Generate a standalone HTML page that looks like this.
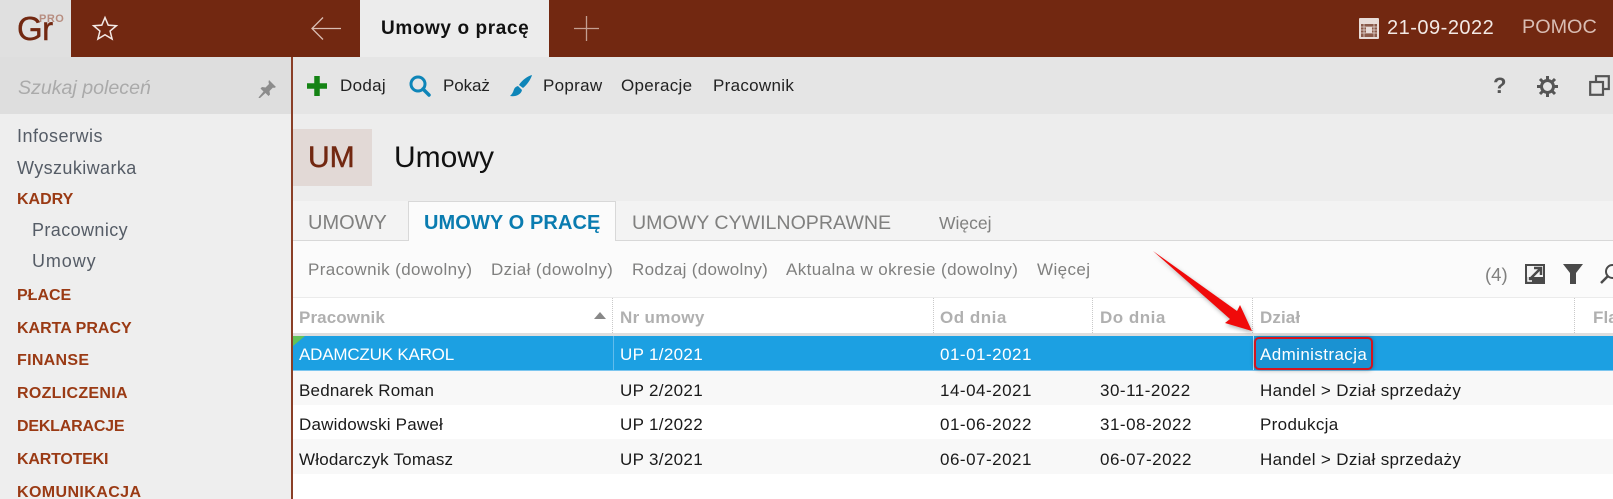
<!DOCTYPE html>
<html lang="pl"><head><meta charset="utf-8"><title>Umowy</title>
<style>
html,body{margin:0;padding:0;width:1613px;height:499px;overflow:hidden;background:#fff}
body{position:relative;font-family:"Liberation Sans",sans-serif}
.b{position:absolute}
.t{position:absolute;white-space:nowrap;line-height:20px;height:20px}
.s{color:#555c66;font-size:18px;letter-spacing:.4px}
.k{color:#9a3a14;font-size:16px;font-weight:bold}
.m{color:#222;font-size:17px;letter-spacing:.3px}
.f{color:#80807f;font-size:17px;letter-spacing:.4px}
.h{color:#b0b0b0;font-size:17px;font-weight:bold;letter-spacing:.1px}
.r{color:#1a1a1a;font-size:17px;letter-spacing:.33px}
.w{color:#fff;font-size:17px;letter-spacing:.33px}
.d{letter-spacing:.5px}
svg{position:absolute;overflow:visible}
</style></head><body>
<!-- top bar -->
<div class="b" style="left:0;top:0;width:1613px;height:57px;background:#722811"></div>
<div class="b" style="left:0;top:0;width:71px;height:57px;background:#e0e0e0"></div>
<div class="t" style="left:17px;top:12px;font-size:33px;line-height:34px;height:34px;letter-spacing:-.5px;color:#722811;-webkit-text-stroke:.4px #722811">Gr</div>
<div class="t" style="left:39px;top:13px;font-size:11px;line-height:12px;height:12px;font-weight:bold;color:#b78d80;letter-spacing:.5px">PRO</div>
<svg style="left:92px;top:16px" width="26" height="25" viewBox="0 0 26 25"><path d="M13 1.500l3.200 7.600 8.200.6-6.300 5.300 2 8-7.100-4.300-7.100 4.300 2-8L1.600 9.700l8.200-.6z" fill="none" stroke="#f3e9e5" stroke-width="1.500"/></svg>
<svg style="left:310px;top:16px" width="32" height="25" viewBox="0 0 32 25"><path d="M31 12.500H2M13 1.500L2 12.500l11 11" fill="none" stroke="#d9bdb3" stroke-width="1.300"/></svg>
<div class="b" style="left:360px;top:0;width:189px;height:57px;background:#ececec"></div>
<div class="t" style="left:381px;top:19px;font-size:19px;font-weight:bold;color:#111;letter-spacing:.6px">Umowy o pracę</div>
<svg style="left:574px;top:16px" width="25" height="25" viewBox="0 0 25 25"><path d="M12.500 0v25M0 12.500h25" stroke="#c49f92" stroke-width="1.300" fill="none"/></svg>
<svg style="left:1359px;top:18px" width="20" height="21" viewBox="0 0 20 21"><rect width="20" height="21" rx="1" fill="#e8dcd8"/><rect x="2" y="6" width="16" height="13" fill="#8a5a4a"/><rect x="7" y="9" width="6" height="6" fill="#e8dcd8"/><path d="M2 9h16M2 12h16M2 15h16M5 6v13M15 6v13" stroke="#e8dcd8" stroke-width=".7"/></svg>
<div class="t" style="left:1387px;top:18px;font-size:20px;color:#f3e9e5;letter-spacing:.5px">21-09-2022</div>
<div class="t" style="left:1522px;top:17px;font-size:19.800px;color:#d9bdb3">POMOC</div>
<!-- toolbar -->
<div class="b" style="left:293px;top:57px;width:1320px;height:57px;background:#e5e5e5"></div>
<svg style="left:307px;top:76px" width="20" height="20" viewBox="0 0 20 20"><path d="M10 0v20M0 10h20" stroke="#148314" stroke-width="5.500"/></svg>
<div class="t m" style="left:340px;top:76px">Dodaj</div>
<svg style="left:409px;top:75px" width="22" height="21" viewBox="0 0 22 21"><circle cx="9" cy="9" r="7" fill="none" stroke="#0e85b8" stroke-width="3"/><path d="M14 14l6 6" stroke="#0e85b8" stroke-width="3.500" stroke-linecap="round"/></svg>
<div class="t m" style="left:443px;top:76px;letter-spacing:-.1px">Pokaż</div>
<svg style="left:510px;top:74px" width="23" height="23" viewBox="0 0 23 23"><path d="M22 1C18 2 12 6 9 11l4 3c4-3 8-9 9-13zM8 12c-4 1-4 4-5 6-1 2-2 3-3 4 5 1 11-1 12-6z" fill="#0e85b8"/></svg>
<div class="t m" style="left:543px;top:76px">Popraw</div>
<div class="t m" style="left:621px;top:76px;letter-spacing:.3px">Operacje</div>
<div class="t m" style="left:713px;top:76px">Pracownik</div>
<div class="t" style="left:1493px;top:76px;font-size:22px;font-weight:bold;color:#555">?</div>
<svg style="left:1537px;top:76px" width="21" height="21" viewBox="0 0 21 21"><circle cx="10.500" cy="10.500" r="6" fill="none" stroke="#555" stroke-width="3"/><path d="M10.500 0v5M10.500 16v5M0 10.500h5M16 10.500h5M3 3l3.500 3.500M14.500 14.500L18 18M18 3l-3.500 3.500M6.500 14.500L3 18" stroke="#555" stroke-width="3"/></svg>
<svg style="left:1589px;top:75px" width="21" height="21" viewBox="0 0 21 21"><rect x="7" y="1.200" width="12.800" height="12.800" fill="none" stroke="#555" stroke-width="2.200"/><rect x="1.200" y="7" width="12.800" height="12.800" fill="#e5e5e5" stroke="#555" stroke-width="2.200"/></svg>
<!-- sidebar -->
<div class="b" style="left:0;top:57px;width:291px;height:57px;background:#dedede"></div>
<div class="b" style="left:0;top:114px;width:291px;height:385px;background:#eee"></div>
<div class="b" style="left:291px;top:57px;width:2px;height:442px;background:#8a3f27"></div>
<div class="t" style="left:18px;top:78px;font-size:19.600px;font-style:italic;color:#aaa">Szukaj poleceń</div>
<svg style="left:258px;top:80px" width="18" height="18" viewBox="0 0 18 18"><path d="M11 0l7 7-2 1-1-.5-3.500 3.500.5 3.500-1.500 1.500-3-3L2 18H1l-.5-.5 5-6-3-3L4 7l3.500.5L11 4 10.500 2z" fill="#8c8c8c"/></svg>
<div class="t s" style="left:17px;top:126px;letter-spacing:.5px">Infoserwis</div>
<div class="t s" style="left:17px;top:158px">Wyszukiwarka</div>
<div class="t k" style="left:17px;top:190px">KADRY</div>
<div class="t s" style="left:32px;top:220px">Pracownicy</div>
<div class="t s" style="left:32px;top:251px;letter-spacing:.9px">Umowy</div>
<div class="t k" style="left:17px;top:286px">PŁACE</div>
<div class="t k" style="left:17px;top:319px">KARTA PRACY</div>
<div class="t k" style="left:17px;top:351px;letter-spacing:.3px">FINANSE</div>
<div class="t k" style="left:17px;top:384px;letter-spacing:.3px">ROZLICZENIA</div>
<div class="t k" style="left:17px;top:417px;letter-spacing:-.2px">DEKLARACJE</div>
<div class="t k" style="left:17px;top:450px;letter-spacing:-.2px">KARTOTEKI</div>
<div class="t k" style="left:17px;top:483px;letter-spacing:.4px">KOMUNIKACJA</div>
<!-- title -->
<div class="b" style="left:293px;top:114px;width:1320px;height:87px;background:#ededed"></div>
<div class="b" style="left:293px;top:129px;width:79px;height:57px;background:#e2d9d6"></div>
<div class="t" style="left:308px;top:143px;font-size:30px;line-height:30px;height:30px;color:#722811;-webkit-text-stroke:.5px #722811">UM</div>
<div class="t" style="left:394px;top:142px;font-size:30px;line-height:32px;height:32px;color:#111">Umowy</div>
<!-- tabs -->
<div class="b" style="left:293px;top:201px;width:1320px;height:40px;background:#f3f3f3;box-shadow:inset 0 -1px 0 #d8d8d8"></div>
<div class="b" style="left:408px;top:201px;width:206px;height:40px;background:#fbfbfb;border:1px solid #d8d8d8;border-bottom:0"></div>
<div class="t" style="left:308px;top:213px;font-size:20px;color:#80807f">UMOWY</div>
<div class="t" style="left:424px;top:213px;font-size:20px;font-weight:bold;color:#0a7cb0;letter-spacing:.1px">UMOWY O PRACĘ</div>
<div class="t" style="left:632px;top:213px;font-size:19.600px;color:#80807f">UMOWY CYWILNOPRAWNE</div>
<div class="t" style="left:939px;top:213px;font-size:17.500px;color:#80807f">Więcej</div>
<!-- filters -->
<div class="b" style="left:293px;top:241px;width:1320px;height:57px;background:#fbfbfb"></div>
<div class="t f" style="left:308px;top:260px">Pracownik (dowolny)</div>
<div class="t f" style="left:491px;top:260px">Dział (dowolny)</div>
<div class="t f" style="left:632px;top:260px;letter-spacing:.3px">Rodzaj (dowolny)</div>
<div class="t f" style="left:786px;top:260px">Aktualna w okresie (dowolny)</div>
<div class="t f" style="left:1037px;top:260px">Więcej</div>
<div class="t" style="left:1485px;top:265px;font-size:18.500px;color:#80807f">(4)</div>
<svg style="left:1525px;top:264px" width="20" height="20" viewBox="0 0 20 20"><rect width="20" height="20" fill="#4a4a4a"/><path d="M2 2h16v11H2z" fill="#f4f4f4"/><path d="M3 17L16 4M9 4h7v7" fill="none" stroke="#4a4a4a" stroke-width="2.500"/><path d="M3 13v4h4" fill="none" stroke="#fff" stroke-width="1.500"/></svg>
<svg style="left:1563px;top:264px" width="20" height="20" viewBox="0 0 20 20"><path d="M0 0h20l-7 9v11H7V9z" fill="#4a4a4a"/></svg>
<svg style="left:1600px;top:264px" width="20" height="20" viewBox="0 0 20 20"><circle cx="12.500" cy="7.500" r="6.500" fill="none" stroke="#4a4a4a" stroke-width="2"/><path d="M7.500 12.500L1 19" stroke="#4a4a4a" stroke-width="2.500"/></svg>
<!-- table head -->
<div class="b" style="left:293px;top:297px;width:1320px;height:36px;background:#fff;border-top:1px solid #ebebeb;box-sizing:border-box"></div>
<div class="b" style="left:293px;top:333px;width:1320px;height:3px;background:#dedede"></div>
<div class="b" style="left:612px;top:298px;height:35px;border-left:1px dotted #c9c9c9"></div>
<div class="b" style="left:933px;top:298px;height:35px;border-left:1px dotted #c9c9c9"></div>
<div class="b" style="left:1092px;top:298px;height:35px;border-left:1px dotted #c9c9c9"></div>
<div class="b" style="left:1252px;top:298px;height:35px;border-left:1px dotted #c9c9c9"></div>
<div class="b" style="left:1574px;top:298px;height:35px;border-left:1px dotted #c9c9c9"></div>
<div class="t h" style="left:299px;top:308px">Pracownik</div>
<svg style="left:594px;top:312px" width="12" height="7" viewBox="0 0 12 7"><path d="M6 0l6 7H0z" fill="#888"/></svg>
<div class="t h" style="left:620px;top:308px;letter-spacing:.3px">Nr umowy</div>
<div class="t h" style="left:940px;top:308px;letter-spacing:.5px">Od dnia</div>
<div class="t h" style="left:1100px;top:308px;letter-spacing:.5px">Do dnia</div>
<div class="t h" style="left:1260px;top:308px">Dział</div>
<div class="t h" style="left:1593px;top:308px">Flagi</div>
<!-- rows -->
<div class="b" style="left:293px;top:336px;width:1320px;height:34px;background:#1ca0e2"></div>
<div class="b" style="left:293px;top:370px;width:1320px;height:1px;background:#7cc6ef"></div>
<div class="b" style="left:613px;top:336px;width:1px;height:34px;background:#62bcec"></div>
<div class="b" style="left:1253px;top:336px;width:1px;height:34px;background:#bfe3f7"></div>
<svg style="left:293px;top:336px" width="12" height="10" viewBox="0 0 12 10"><path d="M0 0h12L0 10z" fill="#62c25a"/></svg>
<div class="b" style="left:293px;top:371px;width:1320px;height:34px;background:#f8f8f8"></div>
<div class="b" style="left:293px;top:405px;width:1320px;height:34px;background:#fff"></div>
<div class="b" style="left:293px;top:439px;width:1320px;height:35px;background:#f8f8f8"></div>
<div class="t w" style="left:299px;top:345px;letter-spacing:-.2px">ADAMCZUK KAROL</div>
<div class="t w" style="left:620px;top:345px">UP 1/2021</div>
<div class="t w d" style="left:940px;top:345px">01-01-2021</div>
<div class="b" style="left:1254px;top:337px;width:119px;height:33px;box-sizing:border-box;background:#1a92d2;border:2px solid #d3141f;border-radius:5px;box-shadow:0 0 4px rgba(0,0,0,.35)"></div>
<div class="t w" style="left:1260px;top:345px;letter-spacing:.4px">Administracja</div>
<div class="t r" style="left:299px;top:381px;letter-spacing:.2px">Bednarek Roman</div>
<div class="t r" style="left:620px;top:381px">UP 2/2021</div>
<div class="t r d" style="left:940px;top:381px">14-04-2021</div>
<div class="t r d" style="left:1100px;top:381px">30-11-2022</div>
<div class="t r" style="left:1260px;top:381px">Handel &gt; Dział sprzedaży</div>
<div class="t r" style="left:299px;top:415px;letter-spacing:.2px">Dawidowski Paweł</div>
<div class="t r" style="left:620px;top:415px">UP 1/2022</div>
<div class="t r d" style="left:940px;top:415px">01-06-2022</div>
<div class="t r d" style="left:1100px;top:415px">31-08-2022</div>
<div class="t r" style="left:1260px;top:415px">Produkcja</div>
<div class="t r" style="left:299px;top:450px;letter-spacing:.2px">Włodarczyk Tomasz</div>
<div class="t r" style="left:620px;top:450px">UP 3/2021</div>
<div class="t r d" style="left:940px;top:450px">06-07-2021</div>
<div class="t r d" style="left:1100px;top:450px">06-07-2022</div>
<div class="t r" style="left:1260px;top:450px">Handel &gt; Dział sprzedaży</div>
<!-- arrow -->
<svg style="left:0;top:0" width="1613" height="499" viewBox="0 0 1613 499"><path d="M1153 251L1237 311 1240 305 1252 331 1225 323 1230 319z" fill="#f00a0a" style="filter:drop-shadow(1px 2px 2px rgba(0,0,0,.3))"/></svg>
</body></html>
